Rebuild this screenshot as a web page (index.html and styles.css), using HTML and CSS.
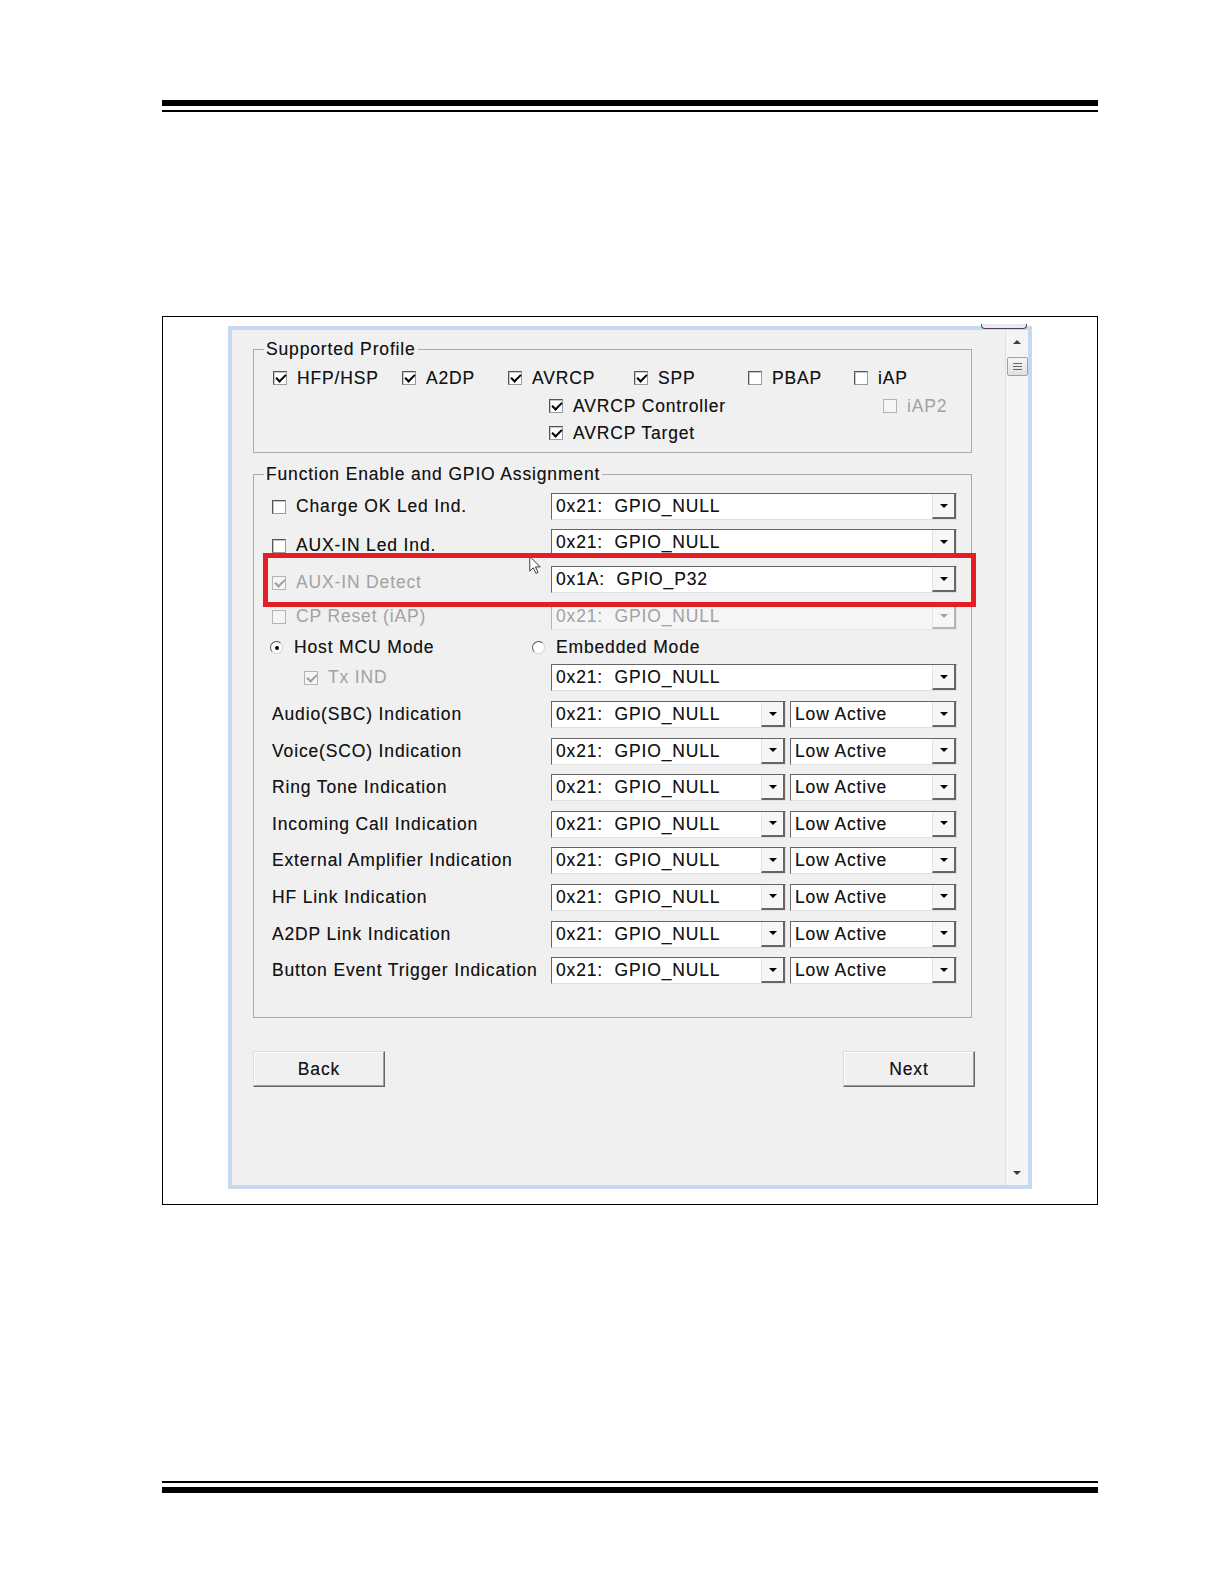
FILE: index.html
```html
<!DOCTYPE html>
<html lang="en">
<head>
	<meta charset="UTF-8">
	<title>Function Enable and GPIO Assignment</title>
	<link rel="stylesheet" href="styles.css">
</head>
<body>
	<div class="rule rule-top"></div>

	<div class="figure">
		<div class="dialog">
			<div class="tab"></div>

			<div class="content">
				<fieldset class="group profile">
					<legend>Supported Profile</legend>
					<div class="prows">
						<div class="prow">
							<span class="opt c1"><span class="cb on"></span>HFP/HSP</span>
							<span class="opt c2"><span class="cb on"></span>A2DP</span>
							<span class="opt c3"><span class="cb on"></span>AVRCP</span>
							<span class="opt c4"><span class="cb on"></span>SPP</span>
							<span class="opt c5"><span class="cb"></span>PBAP</span>
							<span class="opt"><span class="cb"></span>iAP</span>
						</div>
						<div class="prow sub">
							<span class="opt c7"><span class="cb on"></span>AVRCP Controller</span>
							<span class="opt off"><span class="cb dis"></span>iAP2</span>
						</div>
						<div class="prow sub last">
							<span class="opt"><span class="cb on"></span>AVRCP Target</span>
						</div>
					</div>
				</fieldset>

				<fieldset class="group gpio">
					<legend>Function Enable and GPIO Assignment</legend>
					<div class="frows">
						<div class="frow">
							<div class="label"><span class="cb"></span>Charge OK Led Ind.</div>
							<div class="dd full"><span class="val">0x21:  GPIO_NULL</span><span class="arr"></span></div>
						</div>
						<div class="frow g9">
							<div class="label lower"><span class="cb"></span>AUX-IN Led Ind.</div>
							<div class="dd full"><span class="val">0x21:  GPIO_NULL</span><span class="arr"></span></div>
						</div>
						<div class="frow g10">
							<div class="label lower off"><span class="cb dis on"></span>AUX-IN Detect</div>
							<div class="dd full"><span class="val">0x1A:  GPIO_P32</span><span class="arr"></span></div>
						</div>
						<div class="frow g10">
							<div class="label off"><span class="cb dis"></span>CP Reset (iAP)</div>
							<div class="dd full dis"><span class="val">0x21:  GPIO_NULL</span><span class="arr"></span></div>
						</div>
						<div class="frow g4">
							<div class="label radio-host"><span class="rd on"></span>Host MCU Mode</div>
							<div class="label"><span class="rd"></span>Embedded Mode</div>
						</div>
						<div class="frow g3">
							<div class="label indent off"><span class="cb dis on"></span>Tx IND</div>
							<div class="dd full"><span class="val">0x21:  GPIO_NULL</span><span class="arr"></span></div>
						</div>
						<div class="frow g10">
							<div class="label">Audio(SBC) Indication</div>
							<div class="dd gpio-sel"><span class="val">0x21:  GPIO_NULL</span><span class="arr"></span></div>
							<div class="dd level"><span class="val">Low Active</span><span class="arr"></span></div>
						</div>
						<div class="frow">
							<div class="label">Voice(SCO) Indication</div>
							<div class="dd gpio-sel"><span class="val">0x21:  GPIO_NULL</span><span class="arr"></span></div>
							<div class="dd level"><span class="val">Low Active</span><span class="arr"></span></div>
						</div>
						<div class="frow">
							<div class="label">Ring Tone Indication</div>
							<div class="dd gpio-sel"><span class="val">0x21:  GPIO_NULL</span><span class="arr"></span></div>
							<div class="dd level"><span class="val">Low Active</span><span class="arr"></span></div>
						</div>
						<div class="frow">
							<div class="label">Incoming Call Indication</div>
							<div class="dd gpio-sel"><span class="val">0x21:  GPIO_NULL</span><span class="arr"></span></div>
							<div class="dd level"><span class="val">Low Active</span><span class="arr"></span></div>
						</div>
						<div class="frow">
							<div class="label">External Amplifier Indication</div>
							<div class="dd gpio-sel"><span class="val">0x21:  GPIO_NULL</span><span class="arr"></span></div>
							<div class="dd level"><span class="val">Low Active</span><span class="arr"></span></div>
						</div>
						<div class="frow">
							<div class="label">HF Link Indication</div>
							<div class="dd gpio-sel"><span class="val">0x21:  GPIO_NULL</span><span class="arr"></span></div>
							<div class="dd level"><span class="val">Low Active</span><span class="arr"></span></div>
						</div>
						<div class="frow">
							<div class="label">A2DP Link Indication</div>
							<div class="dd gpio-sel"><span class="val">0x21:  GPIO_NULL</span><span class="arr"></span></div>
							<div class="dd level"><span class="val">Low Active</span><span class="arr"></span></div>
						</div>
						<div class="frow">
							<div class="label">Button Event Trigger Indication</div>
							<div class="dd gpio-sel"><span class="val">0x21:  GPIO_NULL</span><span class="arr"></span></div>
							<div class="dd level"><span class="val">Low Active</span><span class="arr"></span></div>
						</div>
					</div>
				</fieldset>

				<div class="buttons">
					<button class="push">Back</button>
					<button class="push">Next</button>
				</div>
			</div>

			<div class="scroll">
				<span class="sarrow up"></span>
				<span class="thumb"><i></i><i></i><i></i></span>
				<span class="spacer"></span>
				<span class="sarrow down"></span>
			</div>

			<svg class="cursor" width="12" height="18" viewBox="0 0 12 19">
				<path d="M0.5 0.5 L0.5 16 L4.2 12.4 L7 18.3 L9.2 17.3 L6.5 11.5 L11.5 11.5 Z" fill="#fff" stroke="#333" stroke-width="1"/>
			</svg>
			<div class="highlight"></div>
		</div>
	</div>

	<div class="rule rule-bottom"></div>
</body>
</html>
```

FILE: styles.css
```css
*{margin:0;padding:0;box-sizing:border-box;}
body{background:#fff;font-family:"Liberation Sans",Arial,sans-serif;}

.rule{
	width:936px;
	height:12px;
	margin-left:162px;
	border-top:6px solid #000;
	border-bottom:2px solid #000;
}
.rule-top{margin-top:100px;}
.rule-bottom{
	margin-top:276px;
	border-top-width:2px;
	border-bottom-width:6px;
}

.figure{
	width:936px;
	height:889px;
	margin:204px 0 0 162px;
	border:1px solid #000;
	padding:9px 0 0 65px;
}
.dialog{
	width:804px;
	height:863px;
	border:4px solid #c6d9ef;
	background:#f0f0f0;
	position:relative;
	display:flex;
}
.tab{
	position:absolute;
	left:749px;
	top:-6px;
	width:46px;
	height:5px;
	border:1.5px solid #4f4353;
	border-top:none;
	border-radius:0 0 4px 4px;
	background:#e6ebf5;
}
.content{
	flex:1;
	font-size:17.5px;
	letter-spacing:0.85px;
	color:#141414;
	text-shadow:0 0 0.6px rgba(0,0,0,0.45);
}

/* group boxes */
.group{
	margin-left:21px;
	width:719px;
	border:1px solid #a9a9a9;
}
.group legend{
	margin-left:10px;
	padding:0 2px;
	line-height:20px;
}
.profile{margin-top:9px;height:114px;}
.gpio{margin-top:11px;height:554px;}

.prows{padding:5px 0 0 19px;}
.prow{display:flex;align-items:center;height:28px;}
.prow.last{height:26px;}
.prow.sub{padding-left:276px;}
.opt{display:flex;align-items:center;}
.c1{width:129px;}
.c2{width:106px;}
.c3{width:126px;}
.c4{width:114px;}
.c5{width:106px;}
.c7{width:334px;}

.off{color:#a2a2a2;text-shadow:none;}

/* check boxes and radios */
.cb{
	position:relative;
	flex:none;
	width:14px;
	height:14px;
	margin-right:10px;
	border:1px solid;
	border-color:#555 #9a9a9a #9a9a9a #555;
	box-shadow:inset 1px 1px 0 #c8c8c8;
	background:#fff;
}
.cb.on::after{
	content:"";
	position:absolute;
	left:4px;
	top:0;
	width:4px;
	height:8px;
	border:solid #000;
	border-width:0 2px 2px 0;
	transform:rotate(45deg);
}
.cb.dis{border-color:#b4b4b4;box-shadow:none;background:#f5f5f5;}
.cb.dis.on::after{border-color:#a0a0a0;}

.rd{
	position:relative;
	flex:none;
	width:13px;
	height:13px;
	margin-right:11px;
	border-radius:50%;
	border:1px solid;
	border-color:#555 #d4d4d4 #d4d4d4 #555;
	background:#fff;
}
.rd.on::after{
	content:"";
	position:absolute;
	left:3.5px;
	top:3.5px;
	width:4px;
	height:4px;
	border-radius:50%;
	background:#000;
}

/* gpio rows */
.frows{padding:9px 0 0 18px;}
.frow{display:flex;align-items:center;height:27px;margin-top:9.6px;}
.frow:first-child{margin-top:0;}
.frow.g9{margin-top:9px;}
.frow.g10{margin-top:10px;}
.frow.g4{margin-top:4px;}
.frow.g3{margin-top:3px;}
.label{
	width:279px;
	flex:none;
	display:flex;
	align-items:center;
	white-space:nowrap;
}
.label.lower{padding-top:6px;}
.label.indent{padding-left:32px;}
.radio-host{width:262px;margin-left:-2px;}

.dd{
	display:flex;
	height:27px;
	background:#fff;
	border:1px solid;
	border-color:#666 #e0e0e0 #e0e0e0 #666;
}
.dd .val{
	flex:1;
	padding-left:4px;
	line-height:25px;
	white-space:pre;
	overflow:hidden;
}
.dd .arr{
	width:24px;
	flex:none;
	display:flex;
	align-items:center;
	justify-content:center;
	background:#f6f6f6;
	border-left:1px solid #e4e4e4;
	border-right:2px solid #666;
	border-bottom:2px solid #666;
}
.dd .arr::before{
	content:"";
	border-left:4.5px solid transparent;
	border-right:4.5px solid transparent;
	border-top:4.5px solid #000;
}
.dd.full{width:406px;}
.dd.gpio-sel{width:235px;}
.dd.level{width:167px;margin-left:4px;}
.dd.dis{
	background:#f5f5f5;
	color:#a2a2a2;
	text-shadow:none;
	border-color:#b4b4b4 #e4e4e4 #e4e4e4 #b4b4b4;
}
.dd.dis .arr{border-right-color:#b4b4b4;border-bottom-color:#b4b4b4;}
.dd.dis .arr::before{border-top-color:#a2a2a2;}

/* buttons */
.buttons{
	display:flex;
	justify-content:space-between;
	width:722px;
	margin:33px 0 0 21px;
}
.push{
	width:132px;
	height:36px;
	font-family:inherit;
	font-size:17.5px;
	letter-spacing:0.85px;
	color:#141414;
	text-shadow:0 0 0.6px rgba(0,0,0,0.45);
	background:#f0f0f0;
	border:1px solid;
	border-color:#dcdcdc #666 #666 #dcdcdc;
	box-shadow:inset -1px -1px 0 #a0a0a0, inset 1px 1px 0 #fff;
}

/* scroll bar */
.scroll{
	width:23px;
	display:flex;
	flex-direction:column;
	align-items:center;
	background:#f4f4f4;
	border-left:1px solid #e0e0e0;
}
.sarrow{
	width:100%;
	height:24px;
	display:flex;
	align-items:center;
	justify-content:center;
}
.sarrow.up::before{
	content:"";
	border-left:4.5px solid transparent;
	border-right:4.5px solid transparent;
	border-bottom:4px solid #3c3c3c;
}
.sarrow.down::before{
	content:"";
	border-left:4.5px solid transparent;
	border-right:4.5px solid transparent;
	border-top:4px solid #3c3c3c;
}
.thumb{
	width:21px;
	height:19px;
	margin-top:3px;
	display:flex;
	flex-direction:column;
	align-items:center;
	justify-content:center;
	gap:2px;
	border:1px solid #a0a0a0;
	border-radius:2px;
	background:linear-gradient(#f6f6f6,#e1e1e1);
}
.thumb i{width:9px;height:1px;background:#6a6a6a;}
.spacer{flex:1;}

/* overlays */
.cursor{position:absolute;left:297px;top:226px;}
.highlight{
	position:absolute;
	left:31px;
	top:223px;
	width:713px;
	height:54px;
	border:5px solid #e31e25;
}
```
